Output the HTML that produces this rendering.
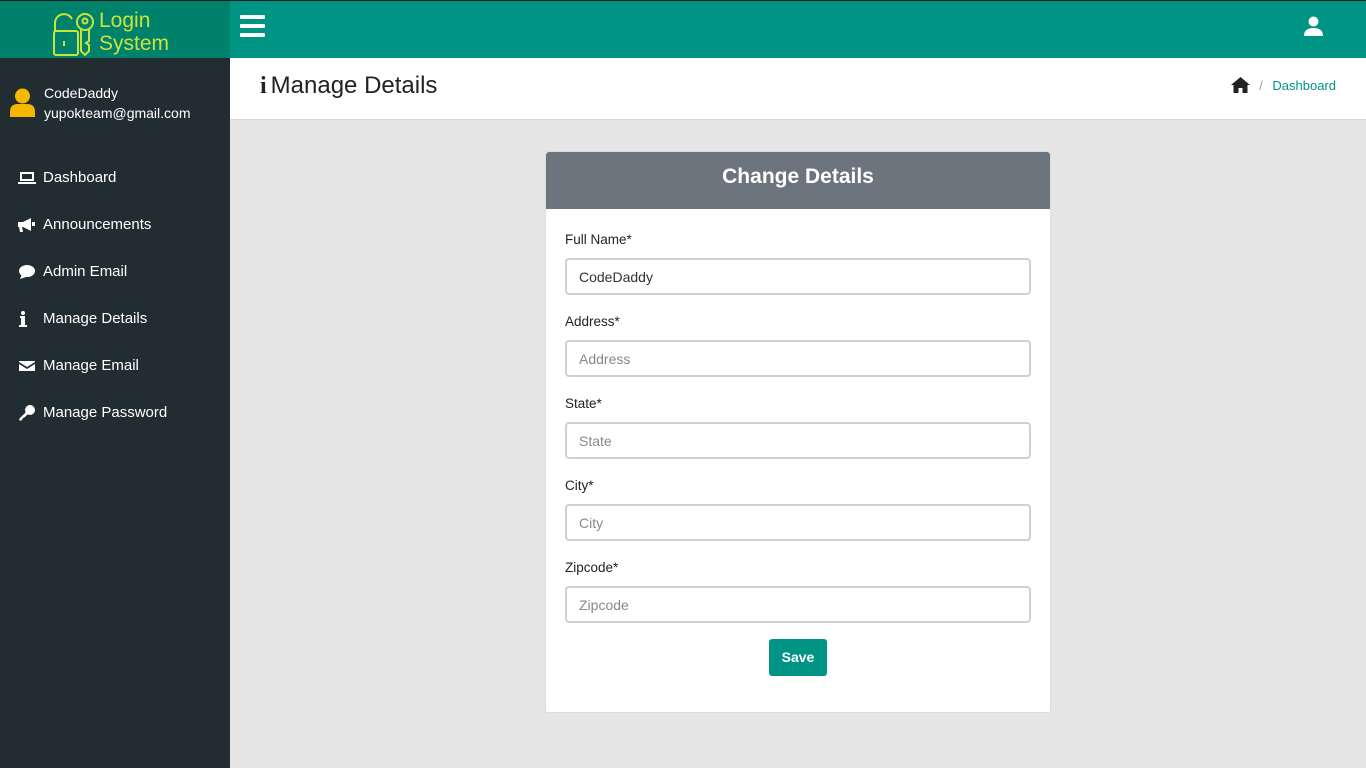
<!DOCTYPE html>
<html><head><meta charset="utf-8"><style>
*{box-sizing:border-box;margin:0;padding:0}
body{width:1366px;height:768px;overflow:hidden;font-family:"Liberation Sans",sans-serif;background:#e5e5e5;position:relative}
.top{position:absolute;left:0;top:0;width:1366px;height:58px;background:#009485;border-top:1px solid #1a1a1a}
.logo{position:absolute;left:0;top:0;width:230px;height:58px;background:#00816c}
.logo .t{position:absolute;left:99px;top:8px;color:#c8e43a;font-size:21px;line-height:23px}
.side{position:absolute;left:0;top:58px;width:230px;height:710px;background:#222d32;color:#fff}
.user{position:absolute;left:44px;top:25px;font-size:14px;line-height:20px}
.menu{position:absolute;left:0;top:96px;width:230px}
.menu div{height:47px;display:flex;align-items:center;font-size:15px;padding-left:18px}
.menu svg{width:18px;height:16px;margin-right:7px;fill:#fff}
.head{position:absolute;left:230px;top:58px;width:1136px;height:62px;background:#fff;border-bottom:1px solid #d8d8d8}
.head h1{position:absolute;left:30px;top:14px;font-weight:normal;font-size:24px;color:#222}
.bc{position:absolute;right:30px;top:19px;font-size:13px;color:#009485}
.card{position:absolute;left:545px;top:151px;width:506px;height:562px;background:#fff;border-radius:3px;border:1px solid #ddd}
.ch{height:57px;background:#6c757d;color:#fff;font-weight:bold;font-size:21px;text-align:center;line-height:50px;border-radius:3px 3px 0 0}
label{position:absolute;left:19px;font-size:13.5px;color:#222}
.in{position:absolute;left:19px;width:466px;height:37px;border:2px solid #d0d0d0;border-radius:4px;font-size:14px;color:#888;padding:9px 12px}
.btn{position:absolute;left:223px;top:487px;width:58px;height:37px;background:#009485;color:#fff;font-weight:bold;font-size:14px;text-align:center;line-height:37px;border-radius:3px}
</style></head><body>
<div class="top">
<div class="logo">
<svg style="position:absolute;left:52px;top:10px" width="46" height="46" viewBox="0 0 46 46" fill="none" stroke="#c8e43a" stroke-width="2"><path d="M3 20 V12 a9 9 0 0 1 17 -4"/><rect x="2" y="20" width="24" height="24" rx="2"/><circle cx="33" cy="11" r="8"/><circle cx="33" cy="10" r="2.5"/><path d="M29 18 V40 l4 4 l4 -4 V34 l-3 -2 l3 -2 V18"/><path d="M12 30 v5"/></svg>
<div class="t">Login<br>System</div>
</div>
<svg style="position:absolute;left:240px;top:14px" width="25" height="22"><rect y="0" width="25" height="4" rx="1" fill="#fff"/><rect y="9" width="25" height="4" rx="1" fill="#fff"/><rect y="18" width="25" height="4" rx="1" fill="#fff"/></svg>
<svg style="position:absolute;left:1304px;top:15px" width="19" height="20" fill="#fff"><circle cx="9.5" cy="5.5" r="5"/><path d="M0 20 q0-8 9.5-8 q9.5 0 9.5 8z"/></svg>
</div>
<div class="side">
<svg style="position:absolute;left:10px;top:30px" width="25" height="29" fill="#f5b800"><circle cx="12.5" cy="8" r="7.5"/><path d="M0 29 v-5 q0-8 8-8 h9 q8 0 8 8 v5z"/></svg>
<div class="user">CodeDaddy<br>yupokteam@gmail.com</div>
<div class="menu">
<div><svg viewBox="0 0 18 16"><path d="M2 2h14v9H2zM4 4v5h10V4zM0 12h18v2H0z"/></svg>Dashboard</div>
<div><svg viewBox="0 0 18 16"><path d="M0 5h5l8-4v13l-8-4H4l1 5H2l-1-5H0z M14 5h3v4h-3z"/></svg>Announcements</div>
<div><svg viewBox="0 0 18 16"><ellipse cx="9" cy="7" rx="8" ry="6"/><path d="M2 15l2-5 4 3z"/></svg>Admin Email</div>
<div><svg viewBox="0 0 18 16"><circle cx="5" cy="2" r="2"/><path d="M2 5h5v9h2v2H1v-2h2V7H2z"/></svg>Manage Details</div>
<div><svg viewBox="0 0 18 16"><path d="M1 3h16v1l-8 5-8-5zM1 6l8 5 8-5v7H1z"/></svg>Manage Email</div>
<div><svg viewBox="0 0 18 16"><circle cx="12" cy="5" r="5"/><path d="M8 7l-7 7 1 2 2-1 1-2 2-1 3-3z"/></svg>Manage Password</div>
</div></div>
<div class="head"><h1><span style="font-family:'Liberation Serif',serif;font-weight:bold;margin-right:4px">i</span>Manage Details</h1>
<div class="bc"><svg width="19" height="16" viewBox="0 0 19 16" style="vertical-align:-3px"><path d="M9.5 0L0 8h2.5v8h5v-5h4v5h5V8H19z" fill="#222"/></svg> <span style="color:#999;margin:0 6px">/</span> Dashboard</div></div>
<div class="card"><div class="ch">Change Details</div>
<label style="top:80px">Full Name*</label><div class="in" style="top:106px;color:#333">CodeDaddy</div>
<label style="top:162px">Address*</label><div class="in" style="top:188px">Address</div>
<label style="top:244px">State*</label><div class="in" style="top:270px">State</div>
<label style="top:326px">City*</label><div class="in" style="top:352px">City</div>
<label style="top:408px">Zipcode*</label><div class="in" style="top:434px">Zipcode</div>
<div class="btn">Save</div></div>
</body></html>
